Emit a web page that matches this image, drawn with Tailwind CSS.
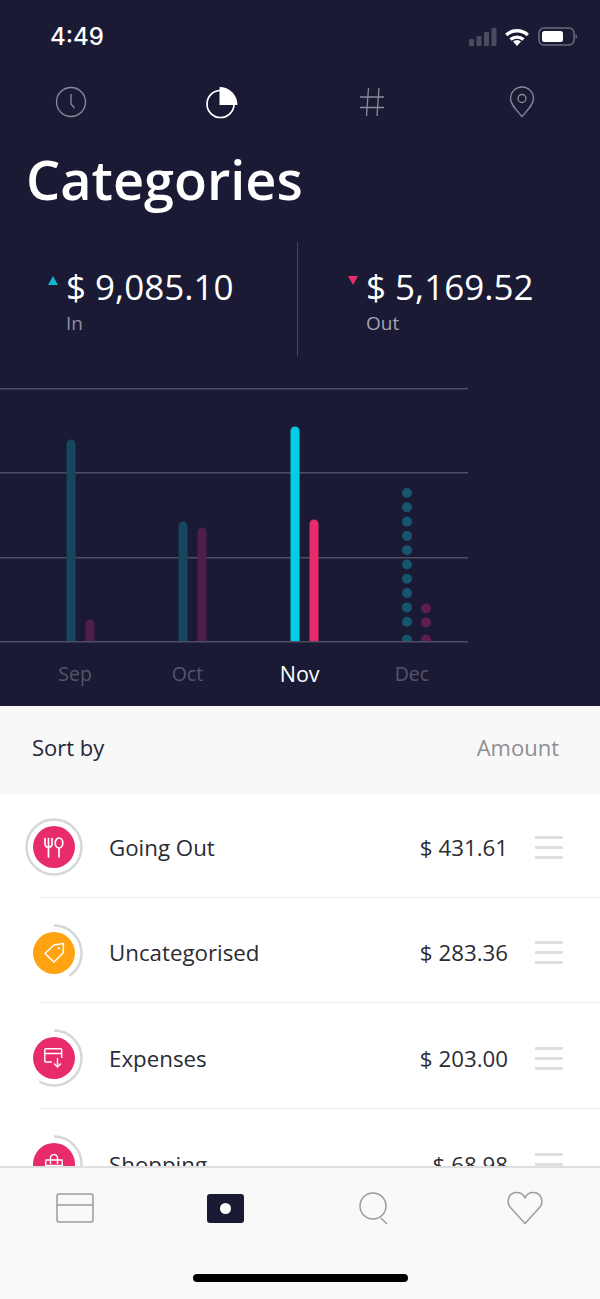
<!DOCTYPE html>
<html lang="en">
<head>
    <meta charset="UTF-8">
    <meta name="viewport" content="width=device-width, initial-scale=1.0">
    <title>Categories</title>
    <script src="https://cdn.jsdelivr.net/npm/@tailwindcss/browser@4"></script>
</head>
<body class="bg-white font-['Open_Sans',sans-serif]">
    <div class="w-[600px] h-[1299px] flex flex-col overflow-hidden">

        <!-- Dark header -->
        <div class="h-[706px] shrink-0 bg-[#1b1a34] text-white">
            <!-- Status bar -->
            <div class="h-[80px] flex items-start justify-between pl-[50px] pr-[23px] pt-[22px]">
                <span class="font-['Inter',sans-serif] font-medium text-[24px] leading-[30px]">4:49</span>
                <div class="flex items-center mt-[5px]">
                    <svg class="mr-[8px]" width="28" height="18" viewBox="0 0 28 18" fill="#4b4a5e">
                        <rect x="0" y="11" width="5" height="7" rx="1.2"/>
                        <rect x="7.500" y="8" width="5" height="10" rx="1.2"/>
                        <rect x="15" y="4" width="5" height="14" rx="1.2"/>
                        <rect x="22.500" y="0" width="5" height="18" rx="1.2"/>
                    </svg>
                    <svg class="mr-[9px]" width="24" height="18" viewBox="0 0 24 18" fill="none" stroke="#fff" stroke-width="3.400">
                        <path d="M1.200 7a16 16 0 0 1 21.600 0"/>
                        <path d="M5.500 11.500a10 10 0 0 1 13 0"/>
                        <path d="M12 18l-4-4.400a6 6 0 0 1 8 0z" fill="#fff" stroke="none"/>
                    </svg>
                    <svg width="39" height="19" viewBox="0 0 39 19" fill="none">
                        <rect x="1" y="1" width="35" height="17" rx="5" stroke="#6b6a7c" stroke-width="1.500"/>
                        <rect x="4" y="4" width="21" height="11" rx="2.500" fill="#fff"/>
                        <path d="M37.500 7v5a2.500 2.500 0 0 0 1.500-2.500A2.500 2.500 0 0 0 37.500 7z" fill="#6b6a7c"/>
                    </svg>
                </div>
            </div>

            <!-- Top tabs -->
            <div class="grid grid-cols-4 w-[601px] -ml-[4px] h-[44px] items-center justify-items-center">
                <svg width="32" height="32" viewBox="0 0 32 32" fill="none" stroke="#8b8a9c" stroke-width="1.300">
                    <circle cx="16" cy="16" r="14.500"/>
                    <path d="M16 8v10l3.500 4"/>
                </svg>
                <svg width="33" height="33" viewBox="0 0 33 33" fill="none" stroke="#fff" stroke-width="1.700">
                    <circle cx="15.500" cy="18" r="13.500"/>
                    <path d="M14.500 1A18 18 0 0 1 32.500 19H14.500z" fill="#fff" stroke="none"/>
                </svg>
                <svg width="26" height="30" viewBox="0 0 26 30" fill="none" stroke="#8b8a9c" stroke-width="1.300">
                    <path d="M9.500 1L7.500 29M20 1L18 29M1 10h24M1 20.500h24"/>
                </svg>
                <svg width="26" height="32" viewBox="0 0 26 32" fill="none" stroke="#8b8a9c" stroke-width="1.300">
                    <path d="M13 30.500C7 23.500 1.500 18.500 1.500 12.500a11.500 11.500 0 0 1 23 0c0 6-5.500 11-11.500 18z"/>
                    <circle cx="13" cy="12.500" r="4"/>
                </svg>
            </div>

            <!-- Title -->
            <h1 class="ml-[26px] mt-[19px] text-[54px] leading-[72px] font-semibold">Categories</h1>

            <!-- In / Out -->
            <div class="flex mt-[27px] h-[114px]">
                <div class="w-[297px] pl-[48px] pt-[24px] flex items-start gap-[7px]">
                    <div class="w-0 h-0 mt-[10px] border-l-[5.500px] border-r-[5.500px] border-b-[9px] border-l-transparent border-r-transparent border-b-[#12b5d2]"></div>
                    <div>
                        <div class="text-[35px] leading-[42px] ml-[1px]">$ 9,085.10</div>
                        <div class="text-[19px] leading-[24px] mt-[3px] text-[#8f8ea0] ml-[1px]">In</div>
                    </div>
                </div>
                <div class="w-[1px] bg-[#45445a]"></div>
                <div class="pl-[50px] pt-[24px] flex items-start gap-[7px]">
                    <div class="w-0 h-0 mt-[10px] border-l-[5.500px] border-r-[5.500px] border-t-[9px] border-l-transparent border-r-transparent border-t-[#e82c6b]"></div>
                    <div>
                        <div class="text-[35px] leading-[42px] ml-[1px]">$ 5,169.52</div>
                        <div class="text-[19px] leading-[24px] mt-[3px] text-[#a3a2b3] ml-[1px]">Out</div>
                    </div>
                </div>
            </div>

            <!-- Chart -->
            <svg class="block mt-[30px]" width="600" height="260" viewBox="0 0 600 260">
                <g fill="#4e4d61">
                    <rect x="0" y="2" width="468" height="1.500"/>
                    <rect x="0" y="86" width="468" height="1.500"/>
                    <rect x="0" y="171" width="468" height="1.500"/>
                    <rect x="0" y="255" width="468" height="1.500"/>
                </g>
                <path d="M66.500 255V58a4.500 4.500 0 0 1 9 0v197zM178.500 255V140a4.500 4.500 0 0 1 9 0v115z" fill="#15475f"/>
                <path d="M85.500 255v-17a4.500 4.500 0 0 1 9 0v17zM197.500 255V146a4.500 4.500 0 0 1 9 0v109z" fill="#4d1f4a"/>
                <path d="M290.500 255V45a4.500 4.500 0 0 1 9 0v210z" fill="#00cde6"/>
                <path d="M309.500 255V138a4.500 4.500 0 0 1 9 0v117z" fill="#e82c6b"/>
                <g fill="#15566e">
                    <circle cx="407" cy="107" r="5"/>
                    <circle cx="407" cy="121.300" r="5"/>
                    <circle cx="407" cy="135.600" r="5"/>
                    <circle cx="407" cy="149.900" r="5"/>
                    <circle cx="407" cy="164.200" r="5"/>
                    <circle cx="407" cy="178.500" r="5"/>
                    <circle cx="407" cy="192.800" r="5"/>
                    <circle cx="407" cy="207.100" r="5"/>
                    <circle cx="407" cy="221.400" r="5"/>
                    <circle cx="407" cy="235.700" r="5"/>
                    <path d="M402.200 255a5 5 0 1 1 9.600 0z"/>
                </g>
                <g fill="#5c1f50">
                    <circle cx="426" cy="222.500" r="5"/>
                    <circle cx="426" cy="236.500" r="5"/>
                    <path d="M421.200 255a5 5 0 1 1 9.600 0z"/>
                </g>
            </svg>

            <!-- Months -->
            <div class="grid grid-cols-4 items-center w-[449px] ml-[19px] mt-[16px] text-[19.500px] leading-[24px] text-center text-[#55546a]">
                <span>Sep</span>
                <span>Oct</span>
                <span class="text-white text-[21.500px]">Nov</span>
                <span>Dec</span>
            </div>
        </div>

        <!-- Sort bar -->
        <div class="h-[88px] shrink-0 bg-[#f8f8f8] flex items-center justify-between pl-[32px] pr-[41px] pb-[5px] text-[22px]">
            <span class="text-[#26263a]">Sort by</span>
            <span class="text-[#8e8e93]">Amount</span>
        </div>

        <!-- Category list -->
        <div class="flex-1 min-h-0 overflow-hidden -mt-[2px]">

            <div class="h-[105.500px] pt-[6px] ml-[40px] border-b border-[#ececec] flex items-center pr-[37px]">
                <div class="relative w-[58px] h-[58px] -ml-[15px] shrink-0 flex items-center justify-center">
                    <svg class="absolute inset-0" width="58" height="58" viewBox="0 0 58 58" fill="none">
                        <circle cx="29" cy="29" r="27.500" stroke="#d5d8d8" stroke-width="2.500"/>
                    </svg>
                    <div class="w-[42px] h-[42px] rounded-full bg-[#e82c6b] flex items-center justify-center">
                        <svg width="20" height="21" viewBox="0 0 20 21" fill="none" stroke="#fff" stroke-width="1.700" stroke-linecap="round">
                            <path d="M1 1.500v5.500c0 2 1.300 3.200 3.500 3.200S8 9 8 7V1.500M4.500 1.500v18.500"/>
                            <ellipse cx="15" cy="6" rx="3.800" ry="5"/>
                            <path d="M15 11v9"/>
                        </svg>
                    </div>
                </div>
                <span class="ml-[26px] flex-1 text-[22.300px] text-[#2b2b33]">Going Out</span>
                <span class="text-[22.300px] text-[#2b2b33]">$ 431.61</span>
                <div class="ml-[27px] w-[28px] flex flex-col gap-[7px]">
                    <div class="h-[3px] bg-[#e0e0e0]"></div>
                    <div class="h-[3px] bg-[#e0e0e0]"></div>
                    <div class="h-[3px] bg-[#e0e0e0]"></div>
                </div>
            </div>

            <div class="h-[105.500px] pt-[6px] ml-[40px] border-b border-[#ececec] flex items-center pr-[37px]">
                <div class="relative w-[58px] h-[58px] -ml-[15px] shrink-0 flex items-center justify-center">
                    <svg class="absolute inset-0 -rotate-90" width="58" height="58" viewBox="0 0 58 58" fill="none">
                        <circle cx="29" cy="29" r="27.500" pathLength="100" stroke-dasharray="40.600 100" stroke="#d5d8d8" stroke-width="2.500"/>
                    </svg>
                    <div class="w-[42px] h-[42px] rounded-full bg-[#ffa313] flex items-center justify-center">
                        <svg width="21" height="21" viewBox="0 0 21 21" fill="none" stroke="#fff" stroke-width="1.500" stroke-linejoin="round">
                            <path d="M1 11.500L10 3l9.500-1.500-.5 9.500L10 20z"/>
                            <circle cx="14.800" cy="6.200" r="1.100" fill="#fff" stroke="none"/>
                        </svg>
                    </div>
                </div>
                <span class="ml-[26px] flex-1 text-[22.300px] text-[#2b2b33]">Uncategorised</span>
                <span class="text-[22.300px] text-[#2b2b33]">$ 283.36</span>
                <div class="ml-[27px] w-[28px] flex flex-col gap-[7px]">
                    <div class="h-[3px] bg-[#e0e0e0]"></div>
                    <div class="h-[3px] bg-[#e0e0e0]"></div>
                    <div class="h-[3px] bg-[#e0e0e0]"></div>
                </div>
            </div>

            <div class="h-[105.500px] pt-[6px] ml-[40px] border-b border-[#ececec] flex items-center pr-[37px]">
                <div class="relative w-[58px] h-[58px] -ml-[15px] shrink-0 flex items-center justify-center">
                    <svg class="absolute inset-0 -rotate-90" width="58" height="58" viewBox="0 0 58 58" fill="none">
                        <circle cx="29" cy="29" r="27.500" pathLength="100" stroke-dasharray="59 100" stroke="#d5d8d8" stroke-width="2.500"/>
                    </svg>
                    <div class="w-[42px] h-[42px] rounded-full bg-[#e82c6b] flex items-center justify-center">
                        <svg width="20" height="20" viewBox="0 0 20 20" fill="none" stroke="#fff" stroke-width="1.400">
                            <path d="M8 14H2a1.200 1.200 0 0 1-1.200-1.200V2A1.200 1.200 0 0 1 2 .8h14.500A1.200 1.200 0 0 1 17.700 2v8M.8 5.500h16.900"/>
                            <path d="M13.500 10v9M10 15.500l3.500 3.500 3.500-3.500"/>
                        </svg>
                    </div>
                </div>
                <span class="ml-[26px] flex-1 text-[22.300px] text-[#2b2b33]">Expenses</span>
                <span class="text-[22.300px] text-[#2b2b33]">$ 203.00</span>
                <div class="ml-[27px] w-[28px] flex flex-col gap-[7px]">
                    <div class="h-[3px] bg-[#e0e0e0]"></div>
                    <div class="h-[3px] bg-[#e0e0e0]"></div>
                    <div class="h-[3px] bg-[#e0e0e0]"></div>
                </div>
            </div>

            <div class="h-[105.500px] pt-[6px] ml-[40px] flex items-center pr-[37px]">
                <div class="relative w-[58px] h-[58px] -ml-[15px] shrink-0 flex items-center justify-center">
                    <svg class="absolute inset-0 -rotate-90" width="58" height="58" viewBox="0 0 58 58" fill="none">
                        <circle cx="29" cy="29" r="27.500" pathLength="100" stroke-dasharray="32 100" stroke="#d5d8d8" stroke-width="2.500"/>
                    </svg>
                    <div class="w-[42px] h-[42px] rounded-full bg-[#e82c6b] flex items-center justify-center">
                        <svg width="20" height="20" viewBox="0 0 20 20" fill="none" stroke="#fff" stroke-width="1.400">
                            <path d="M2 6h16l1 13H1zM6.500 10V4a3.500 3.500 0 0 1 7 0v6M1.500 11.500h17"/>
                        </svg>
                    </div>
                </div>
                <span class="ml-[26px] flex-1 text-[22.300px] text-[#2b2b33]">Shopping</span>
                <span class="text-[22.300px] text-[#2b2b33]">$ 68.98</span>
                <div class="ml-[27px] w-[28px] flex flex-col gap-[7px]">
                    <div class="h-[3px] bg-[#e0e0e0]"></div>
                    <div class="h-[3px] bg-[#e0e0e0]"></div>
                    <div class="h-[3px] bg-[#e0e0e0]"></div>
                </div>
            </div>
        </div>

        <!-- Bottom tabs -->
        <div class="h-[133px] shrink-0 bg-[#f9f9f9] border-t-2 border-[#dfdfdf] flex flex-col">
            <div class="grid grid-cols-4 h-[64px] mt-[8px] items-center justify-items-center">
                <svg width="38" height="30" viewBox="0 0 38 30" fill="none" stroke="#9c9c9c" stroke-width="1.500">
                    <rect x="1" y="1" width="36" height="28" rx="2"/>
                    <path d="M1 12h36"/>
                </svg>
                <div class="w-[37px] h-[29px] rounded-[3px] bg-[#1b1a34] flex items-center justify-center">
                    <div class="w-[11px] h-[11px] rounded-full bg-white"></div>
                </div>
                <svg width="34" height="34" viewBox="0 0 34 34" fill="none" stroke="#9c9c9c" stroke-width="1.500">
                    <circle cx="15" cy="15" r="13"/>
                    <path d="M23 27l6 6"/>
                </svg>
                <svg width="36" height="34" viewBox="0 0 36 34" fill="none" stroke="#9c9c9c" stroke-width="1.500" stroke-linejoin="round">
                    <path d="M18 32.500L3 16C-.5 11.500 1 2 9 1.500c4.500-.3 7.500 2 9 5.500 1.500-3.500 4.500-5.800 9-5.500 8 .5 9.500 10 6 14.500z"/>
                </svg>
            </div>
            <div class="mt-[34px] ml-[193px] w-[215px] h-[8px] rounded-full bg-black"></div>
        </div>
    </div>
</body>
</html>
